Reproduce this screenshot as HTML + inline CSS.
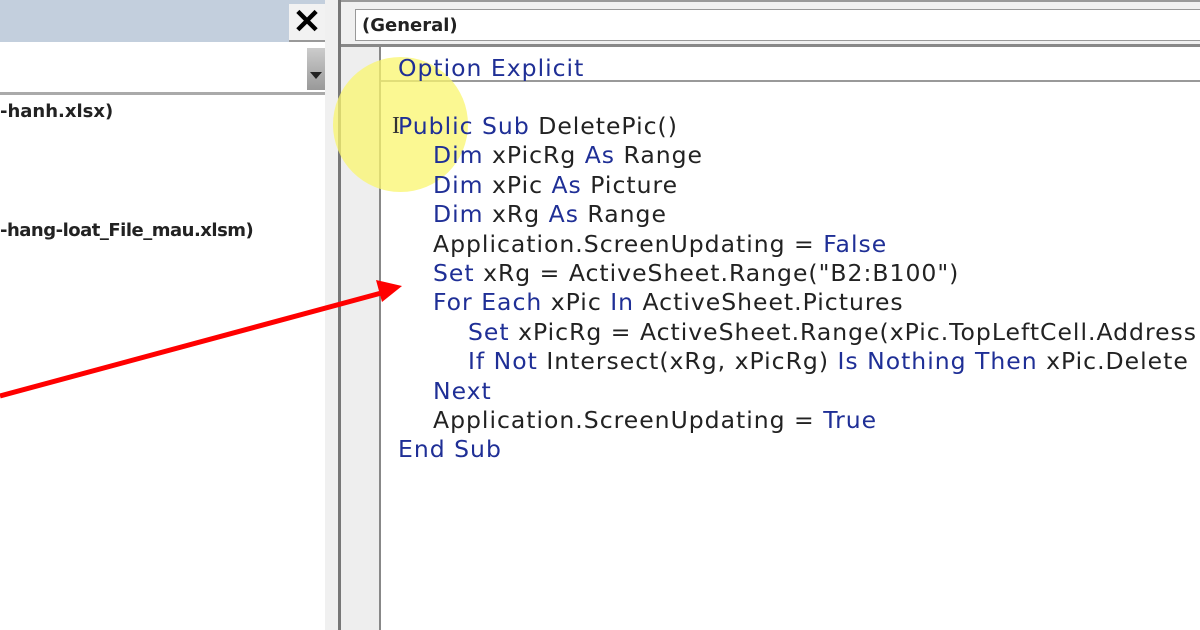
<!DOCTYPE html>
<html><head><style>
html,body{margin:0;width:1200px;height:630px;overflow:hidden}
body{background:#fff;position:relative;font-family:"DejaVu Sans",Verdana,sans-serif}
.a{position:absolute}
.code{position:absolute;font-size:23.5px;letter-spacing:1px;color:#222;line-height:29.4px}
.code div{height:29.4px;white-space:pre}
.i1{padding-left:35px}.i2{padding-left:70px}
.k{color:#1f2f96}
</style></head><body>
<div class="a" style="left:0;top:0;width:325px;height:42px;background:#c3cfdd"></div>
<div class="a" style="left:289px;top:4px;width:36px;height:36px;background:#f2f2f2;border-bottom:2px solid #999;border-right:2px solid #999;font:bold 34px 'Liberation Sans',sans-serif;text-align:center;line-height:36px;color:#000">✕</div>
<div class="a" style="left:0;top:44px;width:325px;height:48px;background:#fff;border-bottom:3px solid #aaa"></div>
<div class="a" style="left:307px;top:48px;width:18px;height:42px;background:linear-gradient(#ccc,#999)"></div>
<div class="a" style="left:310px;top:72px;width:0;height:0;border-left:6px solid transparent;border-right:6px solid transparent;border-top:7px solid #222"></div>
<div class="a" style="left:0;top:101px;font:bold 18px 'DejaVu Sans',sans-serif;color:#222">-hanh.xlsx)</div>
<div class="a" style="left:0;top:220px;font:bold 18px 'DejaVu Sans',sans-serif;color:#222;letter-spacing:-0.5px">-hang-loat_File_mau.xlsm)</div>
<div class="a" style="left:325px;top:0;width:15px;height:630px;background:#f0f0f0"></div>
<div class="a" style="left:338px;top:0;width:3px;height:630px;background:#777"></div>
<div class="a" style="left:341px;top:0;width:859px;height:47px;background:#f0f0f0;border-top:2px solid #999;border-bottom:3px solid #888;box-sizing:border-box"></div>
<div class="a" style="left:355px;top:9px;width:845px;height:32px;background:#fff;border:1px solid #999;border-right:none;box-sizing:border-box;font:bold 18px 'DejaVu Sans',sans-serif;color:#222;padding:5px 0 0 6px">(General)</div>
<div class="a" style="left:341px;top:47px;width:38px;height:583px;background:#eeeeee"></div>
<div class="a" style="left:379px;top:47px;width:2px;height:583px;background:#888"></div>
<div class="a" style="left:381px;top:80px;width:819px;height:2px;background:#999"></div>
<div class="a" style="left:333px;top:57px;width:135px;height:135px;border-radius:50%;background:rgba(250,245,110,0.75)"></div>
<div class="code" style="left:398px;top:54px"><div><span class="k">Option Explicit</span></div></div>
<div class="code" style="left:398px;top:112px"><div><span class="k">Public Sub</span> DeletePic()</div><div class="i1"><span class="k">Dim</span> xPicRg <span class="k">As</span> Range</div><div class="i1"><span class="k">Dim</span> xPic <span class="k">As</span> Picture</div><div class="i1"><span class="k">Dim</span> xRg <span class="k">As</span> Range</div><div class="i1">Application.ScreenUpdating = <span class="k">False</span></div><div class="i1"><span class="k">Set</span> xRg = ActiveSheet.Range("B2:B100")</div><div class="i1"><span class="k">For Each</span> xPic <span class="k">In</span> ActiveSheet.Pictures</div><div class="i2"><span class="k">Set</span> xPicRg = ActiveSheet.Range(xPic.TopLeftCell.Address</div><div class="i2"><span class="k">If Not</span> Intersect(xRg, xPicRg) <span class="k">Is Nothing Then</span> xPic.Delete</div><div class="i1"><span class="k">Next</span></div><div class="i1">Application.ScreenUpdating = <span class="k">True</span></div><div><span class="k">End Sub</span></div></div>
<div class="a" style="left:392px;top:113px;font:24px 'Liberation Serif',serif;color:#333">I</div>
<svg class="a" style="left:0;top:0" width="1200" height="630">
<line x1="0" y1="396" x2="385" y2="292" stroke="#f00" stroke-width="5"/>
<polygon points="402,286 376,280 382,302" fill="#f00"/>
</svg>
</body></html>
